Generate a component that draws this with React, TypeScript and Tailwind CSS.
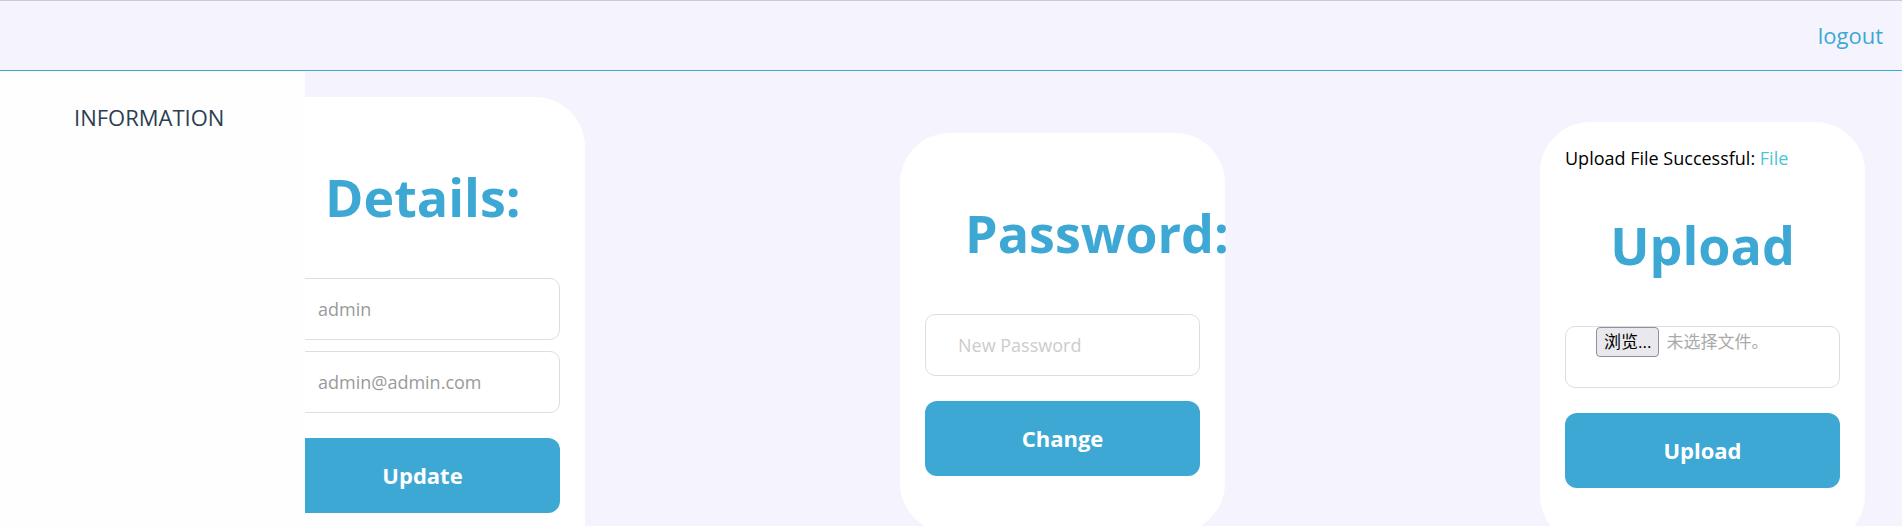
import React from "react";

const inputCls =
  "block w-full h-[62px] rounded-[10px] border border-[#dddde5] bg-white px-[32px] text-[18px] outline-none";

function Card({ children }: { children: React.ReactNode }) {
  return (
    <div className="w-[325px] shrink-0 rounded-[50px] bg-white px-[25px] pt-[25px] pb-[57px]">
      {children}
    </div>
  );
}

function Heading({ children }: { children: React.ReactNode }) {
  return (
    <h1 className="mt-[39px] mb-[46px] px-[40px] text-center text-[52px] font-bold leading-[71px] text-[#3da8d4] whitespace-nowrap">
      {children}
    </h1>
  );
}

function PrimaryButton({ children }: { children: React.ReactNode }) {
  return (
    <button className="mt-[25px] block h-[75px] w-full rounded-[12px] bg-[#3da8d4] text-[22px] font-bold text-white">
      {children}
    </button>
  );
}

export default function App() {
  return (
    <div className="relative h-[526px] w-full overflow-hidden bg-[#f5f4fe] font-['Open_Sans','Noto_Sans_CJK_SC',sans-serif]">
      <header className="flex h-[71px] items-center justify-end border-t border-b border-t-[#cccccc] border-b-[#3da8d4] bg-[#f5f4fe] pr-[19px]">
        <a className="text-[22px] text-[#3da8d4] cursor-pointer">logout</a>
      </header>

      <aside className="absolute left-0 top-[71px] bottom-0 z-10 w-[305px] bg-[#fefefe] pl-[74px] pt-[30px]">
        <div className="text-[22px] leading-[33px] text-[#2c3e50]">INFORMATION</div>
      </aside>

      <main className="flex h-[524px] items-center gap-[315px] pl-[260px]">
        <Card>
          <Heading>Details:</Heading>
          <input className={inputCls + " text-[#9a9a9a]"} defaultValue="admin" readOnly />
          <input className={inputCls + " mt-[11px] text-[#9a9a9a]"} defaultValue="admin@admin.com" readOnly />
          <PrimaryButton>Update</PrimaryButton>
        </Card>

        <Card>
          <Heading>Password:</Heading>
          <input className={inputCls + " placeholder:text-[#cccccc]"} placeholder="New Password" />
          <PrimaryButton>Change</PrimaryButton>
        </Card>

        <Card>
          <div className="text-[18px] leading-[23px] text-black whitespace-nowrap">
            Upload File Successful: <span className="text-[#4cc4d4]">File</span>
          </div>
          <Heading>Upload</Heading>
          <div className="flex h-[62px] items-start gap-[7px] rounded-[10px] border border-[#dddde5] bg-white px-[30px]">
            <span className="flex h-[30px] items-center rounded-[4px] border border-[#8f8f9d] bg-[#e9e9ed] px-[7px] text-[17px] text-black">
              浏览...
            </span>
            <span className="text-[17px] leading-[30px] text-[#aaaaaa]">未选择文件。</span>
          </div>
          <PrimaryButton>Upload</PrimaryButton>
        </Card>
      </main>
    </div>
  );
}
